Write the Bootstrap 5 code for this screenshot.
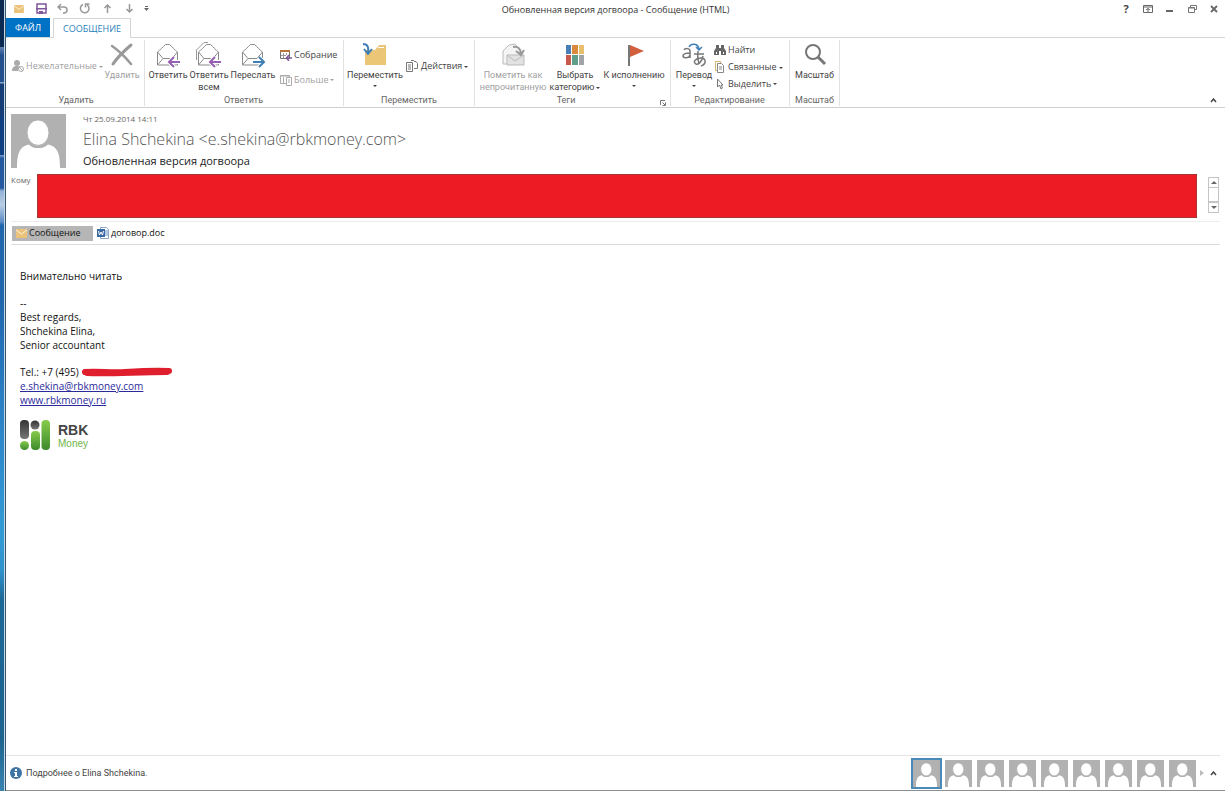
<!DOCTYPE html>
<html lang="ru">
<head>
<meta charset="utf-8">
<meta name="viewport" content="width=device-width, initial-scale=1">
<title>Обновленная версия догвоора - Сообщение (HTML)</title>
<link href="https://cdn.jsdelivr.net/npm/bootstrap@5.3.0/dist/css/bootstrap.min.css" rel="stylesheet">
<style>
body{font-family:"Open Sans","Noto Sans",sans-serif;font-size:9px;line-height:12px;color:#444;background:#fff}
svg{display:block;flex:none}
button,.btn{font:inherit;color:inherit;border:0;border-radius:0;padding:0;line-height:12px;background:none}
.desk{width:6px;flex:none;border-right:1px solid #35566f;background:linear-gradient(90deg,transparent 4px,#c4d8e8 4px),linear-gradient(#0b2a52 0 47px,#5d7fb0 47px 48px,#234f8d 55px 82px,#86a5ca 82px 83px,#163d75 84px 116px,#0f3f80 116px 155px,#6c93c4 155px 156px,#2459a0 158px 188px,#93b2d6 191px,#b8cde4 205px,#5a8bc4 222px,#1f66ad 225px 300px,#2a7fc4 400px,#319bd6 530px,#2f93cc 570px,#1b6796 600px,#1d648f 740px,#3a82b0 100%)}
.titlebar{height:18px}
.qat{position:absolute;left:6px;top:2px;gap:8px}
.wctl{position:absolute;right:4px;top:2px;gap:8px}
.wctl button,.qat button{width:14px;height:13px;display:flex;align-items:center;justify-content:center}
.wctl .help{font-size:11px}
.wtitle{font-size:9px;line-height:19px;color:#333}
.tabs{height:20px;border-bottom:1px solid #d5d5d5}
.tabs button{font-size:9px;height:19px}
.tab-file{background:#0072c6!important;color:#fff;width:44px}
.tab-msg{color:#2a7fb8;width:78px;height:20px!important;margin-left:3px;border:1px solid #d5d5d5;border-bottom:0;background:#fff}
.ribbon{height:70px;border-bottom:1px solid #cfcfcf}
.grp{display:flex;flex-direction:column;border-right:1px solid #e2e2e2;padding-top:2px;margin-top:2px;height:66px}
.grp-body{display:flex;height:54px}
.grp-name{text-align:center;color:#666}
.big,.grp-name,.info{font-family:Roboto,"Open Sans",sans-serif}
.big{display:flex;flex-direction:column;align-items:center;white-space:nowrap}
.big svg{margin-bottom:1px}
.sm{display:flex;align-items:center;gap:2px;white-space:nowrap}
.grp-body>.sm{height:48px}
.stack{display:flex;flex-direction:column;height:50px}
.off{color:#a0a0a0}
.caret{display:inline-block;border:2px solid transparent;border-top-color:currentColor;border-bottom:0;vertical-align:middle;margin-left:2px}
.w36{width:36px}.w40{width:40px}.w42{width:42px}.w46{width:46px}.w54{width:54px}.w64{width:64px}.w70{width:70px}.w92{width:92px}
.g1{width:139px;padding-left:6px}.g2{width:199px;padding-left:3px}.g3{width:131px;padding-left:4px}.g4{width:196px;padding-left:3px}.g5{width:119px;padding-left:3px}.g6{width:50px}
.msghead{padding:6px 5px 0}
.face{width:55px;height:54px}
.sender{margin-left:17px}
.when{font-size:8px;line-height:10px;color:#666}
.from{font-size:16px;font-weight:300;line-height:20px;color:#555;margin:5px 0}
.subj{font-size:11px;line-height:14px;color:#222;margin:0;font-weight:400}
.to{margin:6px 0 3px;font-size:8px;color:#666}
.redact{height:44px;background:#ed1c24;border:1px solid #a33;margin:0 11px 0 6px}
.scr{width:11px;margin:3px 1px 0 0}
.scr button{height:11px;width:11px;border:1px solid #c4c4c4;display:flex;align-items:center;justify-content:center;color:#666}
.thumb{height:14px;border:1px solid #c4c4c4;border-top:0}
.att{border-top:1px solid #ececec;border-bottom:1px solid #dcdcdc;height:24px;color:#111}
.att-on{background:#b6b6b6!important;width:81px;height:15px;margin-left:1px}
.mail{padding:24px 14px 14px;font-size:10px;line-height:14px;color:#111}
.mail p{margin:0 0 13px}
.mail a{color:#2a2a9c}
.scrib{margin:-1px 0 0 2px}
.brand-row{margin-top:13px}
.brand-t{margin-left:8px;padding-top:2px;font-family:"Liberation Sans",Arial,sans-serif}
.brand-t b{display:block;font-size:14px;line-height:15px;color:#444}
.brand-t span{display:block;line-height:11px;color:#6fb544}
.foot{border-top:1px solid #e4e4e4;height:35px;margin-right:5px;padding-left:4px}
.foot .pic{width:27px;height:27px}
.foot button.sel{outline:2px solid #4a8ab8}
#people{gap:5px}
.more{margin:0 3px 0 6px}
.base{height:1px;background:#8a8f94}
</style>
</head>
<body>
<svg width="0" height="0" class="position-absolute">
<symbol id="face" viewBox="0 0 55 55" preserveAspectRatio="none"><path fill="#b1b1b1" d="M0 0h55v55H0z"/><path fill="#fff" d="M6 55c0-14 2-22 12-24 3 5 15 5 19 0 10 2 12 10 12 24z"/><ellipse cx="27" cy="19" rx="11" ry="13" fill="#fff" stroke="#b1b1b1"/></symbol>
<symbol id="mail" viewBox="0 0 11 9"><path fill="#eac27a" d="M0 0h11v9H0z"/><path d="M0 1l5.500 4L11 1" fill="none" stroke="#fff4dc"/></symbol>
<symbol id="env" viewBox="0 0 26 26"><path d="M2.500 10v13h20V10c-3-2-5-5-8-7.500h-4C8 5 5 8 2.500 10l5.500 6.500h9l5.500-6.500M2.500 23L8 16.500" fill="#fff" stroke="#8a8a8a"/></symbol>
<symbol id="up" viewBox="0 0 7 5"><path d="M1 4l2.500-3L6 4" fill="none" stroke="currentColor" stroke-width="1.500"/></symbol>
</svg>
<div class="d-flex vh-100">
<div class="desk"></div>
<div class="d-flex flex-column flex-grow-1">
<header>
<div class="titlebar position-relative text-center">
<div class="qat d-flex">
<button aria-label="Почта"><svg width="10" height="8"><use href="#mail"/></svg></button>
<button aria-label="Сохранить"><svg width="11" height="11" viewBox="0 0 11 11"><path d="M1 1h9v9H1z" fill="#fff" stroke="#80579c" stroke-width="1.500"/><path d="M0 5h11v1.500H0zM3 8h4v3H3z" fill="#80579c"/></svg></button>
<button aria-label="Отменить"><svg width="12" height="11" viewBox="0 0 12 11" fill="none" stroke="#999" stroke-width="1.500"><path d="M4 1L1 4l3 3M1 4h6c4 0 4 6 0 6H6"/></svg></button>
<button aria-label="Повторить"><svg width="12" height="11" viewBox="0 0 12 11" fill="none" stroke="#999" stroke-width="1.500"><path d="M4 1.500a4.300 4.300 0 1 0 4 .3M6.500 4.500V1h4"/></svg></button>
<button aria-label="Предыдущий"><svg width="9" height="10" viewBox="0 0 9 10" fill="none" stroke="#999" stroke-width="1.500"><path d="M4.500 9V1M1.500 4L4.500 1l3 3"/></svg></button>
<button aria-label="Следующий"><svg width="9" height="10" viewBox="0 0 9 10" fill="none" stroke="#999" stroke-width="1.500"><path d="M4.500 0v8M1.500 5l3 3 3-3"/></svg></button>
<button class="w-auto" aria-label="Настройка панели"><svg width="5" height="5" viewBox="0 0 5 5" fill="#666"><path d="M1 0h3v1H1zM0 2h5L2.500 5z"/></svg></button>
</div>
<span class="wtitle">Обновленная версия догвоора - Сообщение (HTML)</span>
<div class="wctl d-flex">
<button class="help fw-bold" aria-label="Справка">?</button>
<button aria-label="Лента"><svg width="10" height="8" viewBox="0 0 10 8" fill="none" stroke="#666"><path d="M.5.500h9v7h-9zM0 2h10M5 7V3.500M3 5l2-1.500L7 5"/></svg></button>
<button aria-label="Свернуть"><svg width="8" height="8"><path fill="#666" d="M0 5h7v2H0z"/></svg></button>
<button aria-label="Развернуть"><svg width="9" height="8" viewBox="0 0 9 8" fill="none" stroke="#777"><path d="M2.500 2V.500h6v4H7M.5 2.500h6v5h-6zM.5 3h6"/></svg></button>
<button aria-label="Закрыть"><svg width="8" height="8" viewBox="0 0 8 8"><path d="M1 1l6 6M7 1L1 7" stroke="#666" stroke-width="1.800"/></svg></button>
</div>
</div>
<nav class="tabs d-flex"><button class="tab-file">ФАЙЛ</button><button class="tab-msg">СООБЩЕНИЕ</button></nav>
<div class="ribbon d-flex position-relative">
<section class="grp g1"><div class="grp-body">
<button class="sm off w92"><svg width="12" height="14" viewBox="0 0 12 14" fill="#aaa"><circle cx="5" cy="4" r="3"/><path d="M0 12c0-4 2-5 5-5s3 1 3 1l-2 4z"/><circle cx="9" cy="10" r="2.500" fill="#fff" stroke="#aaa"/><path d="M7 8l4 4" stroke="#aaa"/></svg><span>Нежелательные<i class="caret"></i></span></button>
<button class="big off w36"><svg width="26" height="26" viewBox="0 0 26 26" fill="none" stroke="#999" stroke-linecap="round"><path d="M3 4c6 4 14 12 19 18" stroke-width="2.500"/><path d="M22 3C15 9 8 16 4 22" stroke-width="3"/></svg>Удалить</button>
</div><div class="grp-name pe-1">Удалить</div></section>
<section class="grp g2"><div class="grp-body">
<button class="big w40"><svg width="26" height="26" viewBox="0 0 26 26"><use href="#env"/><path d="M26 20H15M19 15l-5 5 5 5" fill="none" stroke="#fff" stroke-width="4"/><path d="M25 20H15M19 15l-5 5 5 5" fill="none" stroke="#9560b0" stroke-width="2"/></svg>Ответить</button>
<button class="big w42"><svg width="26" height="26" viewBox="0 0 26 26"><path d="M.5 18V8L8 .500h4" fill="none" stroke="#999"/><use href="#env"/><path d="M26 20H15M19 15l-5 5 5 5" fill="none" stroke="#fff" stroke-width="4"/><path d="M25 20H15M19 15l-5 5 5 5" fill="none" stroke="#9560b0" stroke-width="2"/></svg>Ответить<br>всем</button>
<button class="big w46"><svg width="26" height="26" viewBox="0 0 26 26"><use href="#env"/><path d="M12 20h11M19 15l5 5-5 5" fill="none" stroke="#fff" stroke-width="4"/><path d="M13 20h11M19 15l5 5-5 5" fill="none" stroke="#3f7fb5" stroke-width="2"/></svg>Переслать</button>
<div class="stack justify-content-around ms-1">
<button class="sm"><svg width="12" height="12" viewBox="0 0 12 12" fill="none"><path d="M.5 2.500h9v7h-9z" stroke="#777"/><path d="M0 1h10v2H0z" fill="#b9763a"/><path d="M3.500 4v5M6.500 4v2M1 6.500h5" stroke="#999"/><path d="M12 9H7M9 6L6.500 9 9 12" stroke="#80579c" stroke-width="1.500"/></svg>Собрание</button>
<button class="sm off"><svg width="12" height="12" viewBox="0 0 12 12" fill="none" stroke="#aaa"><path d="M.5 1.500h9v8h-9zM0 2h10M3.500 3v6"/><path d="M6.500 3.500h5v8h-5zM8 6h2M8 8h2" fill="#fff"/></svg><span>Больше<i class="caret"></i></span></button></div>
</div><div class="grp-name pe-1">Ответить</div></section>
<section class="grp g3"><div class="grp-body">
<button class="big w54"><svg width="26" height="26" viewBox="0 0 26 26"><path d="M3 23V8h10l4-5h7v20z" fill="#ebc677"/><path d="M16 5.500h6" stroke="#fff"/><path d="M1 2c5 0 6 4 5 9M2 7l4 5 4-5" fill="none" stroke="#3f7fb5" stroke-width="2"/></svg>Переместить<i class="caret mt-1 ms-0"></i></button>
<button class="sm ms-1"><svg width="13" height="13" viewBox="0 0 13 13" fill="none" stroke="#777"><path d="M.5 2.500h6v9h-6zM2 5h3M2 7h3M2 9h3M5 .500h3M8 1.500h2l1.500 2v5H8"/></svg><span>Действия<i class="caret"></i></span></button>
</div><div class="grp-name pe-1">Переместить</div></section>
<section class="grp g4 position-relative"><div class="grp-body">
<button class="big off w70"><svg width="26" height="26" viewBox="0 0 26 26"><path d="M3 22V9l6-6 6-1 5 6v14z" fill="#f4f4f4" stroke="#bbb"/><path d="M7 13h17v10H7z" fill="#e2e2e2" stroke="#bbb"/><path d="M7 13l8 6 9-6" fill="none" stroke="#bbb"/><path d="M13 5c5-1 8 2 8 7M16 9l5 4 3-5" fill="none" stroke="#999" stroke-width="2"/></svg>Пометить как<br>непрочитанную</button>
<button class="big w54"><svg width="26" height="26" viewBox="0 0 26 26"><path d="M4 3h5v9H4z" fill="#4a7fb5"/><path d="M10 3h6v9h-6z" fill="#d98a3c"/><path d="M17 3h5v9h-5z" fill="#e6c06c"/><path d="M4 13h5v10H4z" fill="#c75a4a"/><path d="M10 13h6v10h-6z" fill="#5f9f8a"/><path d="M17 13h5v10h-5z" fill="#a0a3a8"/></svg>Выбрать<br><span>категорию<i class="caret"></i></span></button>
<button class="big w64"><svg width="26" height="26" viewBox="0 0 26 26"><path d="M8 3v21" stroke="#777" stroke-width="2"/><path d="M9 3l14 6-14 6z" fill="#d2603f"/></svg>К исполнению<i class="caret mt-1 ms-0"></i></button>
</div><div class="grp-name pe-3">Теги</div>
<button class="position-absolute bottom-0 end-0 px-1" aria-label="Параметры тегов"><svg width="6" height="6" viewBox="0 0 6 6" fill="none" stroke="#777"><path d="M.5 5V.500H5M2.500 2.500L5 5M5.500 2.500v3h-3"/></svg></button></section>
<section class="grp g5"><div class="grp-body">
<button class="big w40"><svg width="26" height="26" viewBox="0 0 26 26" fill="none" stroke="#777" stroke-width="1.500"><path d="M3 8c1-2 6-2 6 1v7M9 11c-4 0-7 1-7 3s6 3 7-1"/><path d="M13 12h10M17 9c-1 6 0 9 1 13M22 14c-1 5-4 9-7 8-4-2 0-6 5-6 5 0 6 6 0 8"/><path d="M8 5c2-4 9-4 10 2M15 5l3 3 3-3" stroke="#3f7fb5"/></svg>Перевод<i class="caret mt-1 ms-0"></i></button>
<div class="stack justify-content-around">
<button class="sm"><svg width="12" height="10" viewBox="0 0 12 10" fill="#666"><path d="M2 0h3v3h2V0h3v3l2 3v4H7V6H5v4H0V6l2-3z"/><path d="M2 7h1v2H2zM9 7h1v2H9z" fill="#fff"/></svg>Найти</button>
<button class="sm"><svg width="12" height="12" viewBox="0 0 12 12" fill="#fff" stroke="#888"><path d="M1.500.500h5v9h-5z" stroke="#d3b66c"/><path d="M3.500 2.500h4l2 2v7h-6zM5 6h3M5 8h3"/></svg><span>Связанные<i class="caret"></i></span></button>
<button class="sm"><svg width="12" height="12" viewBox="0 0 12 12" fill="#fff" stroke="#777"><path d="M3.500 1v8l2-2 1.500 4 1.500-1L7 7h2z"/></svg><span>Выделить<i class="caret"></i></span></button></div>
</div><div class="grp-name pe-1">Редактирование</div></section>
<section class="grp g6"><div class="grp-body justify-content-center">
<button class="big w40"><svg width="26" height="26" viewBox="0 0 26 26" fill="none" stroke="#777"><circle cx="11" cy="10" r="7" stroke-width="2"/><path d="M16 15l7 7" stroke-width="3"/></svg>Масштаб</button>
</div><div class="grp-name">Масштаб</div></section>
<button class="position-absolute bottom-0 end-0 p-1 me-1" aria-label="Свернуть ленту"><svg width="7" height="5"><use href="#up"/></svg></button>
</div>
</header>
<section class="msghead">
<div class="d-flex">
<svg class="face"><use href="#face"/></svg>
<div class="sender"><div class="when">Чт 25.09.2014 14:11</div><div class="from">Elina Shchekina &lt;e.shekina@rbkmoney.com&gt;</div><h1 class="subj">Обновленная версия догвоора</h1></div>
</div>
<div class="to d-flex"><span>Кому</span><div class="redact flex-grow-1"></div>
<div class="scr"><button aria-label="Вверх"><svg width="6" height="3"><path d="M0 3l3-3 3 3z" fill="currentColor"/></svg></button><div class="thumb"></div><button aria-label="Вниз"><svg width="6" height="3"><path d="M0 0l3 3 3-3z" fill="currentColor"/></svg></button></div></div>
<div class="att d-flex align-items-center">
<button class="att-on sm ps-1"><svg width="11" height="9"><use href="#mail"/></svg>Сообщение</button>
<button class="sm ms-1"><svg width="12" height="12" viewBox="0 0 12 12"><path d="M3.500.500h6l2 2v9h-8z" fill="#fff" stroke="#8aa5c4"/><path d="M8 4h3M8 6h3M8 8h3" stroke="#6a94c4"/><path d="M0 2h8v8H0z" fill="#3b6ba5"/><path d="M1.500 4l1 4L4 5l1.500 3 1-4" fill="none" stroke="#fff"/></svg>договор.doc</button>
</div>
</section>
<main class="mail flex-grow-1">
<p>Внимательно читать</p>
<p>--<br>Best regards,<br>Shchekina Elina,<br>Senior accountant</p>
<div class="d-flex align-items-center">Tel.: +7 (495) <svg class="scrib" width="93" height="10" viewBox="0 0 93 10"><path d="M4 5c15-1 25 1 40 0s30-2 44-1M6 6c24 1 50-1 80-1" fill="none" stroke="#df1f2d" stroke-width="6" stroke-linecap="round"/></svg></div>
<a href="mailto:e.shekina@rbkmoney.com">e.shekina@rbkmoney.com</a><br>
<a href="http://www.rbkmoney.ru">www.rbkmoney.ru</a>
<div class="d-flex align-items-center brand-row">
<svg width="30" height="30" viewBox="0 0 30 30"><defs><linearGradient id="gn" x2="0" y2="1"><stop stop-color="#86cc4c"/><stop offset="1" stop-color="#3d8a2c"/></linearGradient><linearGradient id="gk" x2="0" y2="1"><stop stop-color="#333"/><stop offset="1" stop-color="#777"/></linearGradient></defs><rect width="9" height="19" rx="4" fill="url(#gk)"/><circle cx="4.500" cy="25.500" r="4.500" fill="url(#gn)"/><circle cx="15" cy="5" r="4.500" fill="url(#gk)"/><rect x="11" y="11" width="9" height="19" rx="4" fill="url(#gn)"/><rect x="21.500" width="8.500" height="30" rx="4" fill="url(#gn)"/></svg>
<div class="brand-t"><b>RBK</b><span>Money</span></div></div>
</main>
<footer class="foot d-flex align-items-center">
<svg width="12" height="12" viewBox="0 0 12 12"><circle cx="6" cy="6" r="6" fill="#3f75a5"/><path d="M5 2h2v2H5zM4 5h3v4h1v1H4V9h1V6H4z" fill="#fff"/></svg>
<span class="info ms-1">Подробнее о Elina Shchekina.</span>
<div class="d-flex ms-auto align-items-center" id="people"></div>
<svg class="ms-1" width="4" height="6"><path d="M0 0l4 3-4 3z" fill="#bbb"/></svg>
<button class="more" aria-label="Развернуть панель"><svg width="7" height="5"><use href="#up"/></svg></button>
</footer>
<div class="base"></div>
</div>
</div>
<script src="https://cdn.jsdelivr.net/npm/bootstrap@5.3.0/dist/js/bootstrap.bundle.min.js"></script>
<script>
const people = document.getElementById('people');
for (let i = 0; i < 9; i++) {
  people.insertAdjacentHTML('beforeend', `<button class="${i ? '' : 'sel'}" aria-label="Контакт ${i + 1}"><svg class="pic"><use href="#face"/></svg></button>`);
}
</script>
</body>
</html>
